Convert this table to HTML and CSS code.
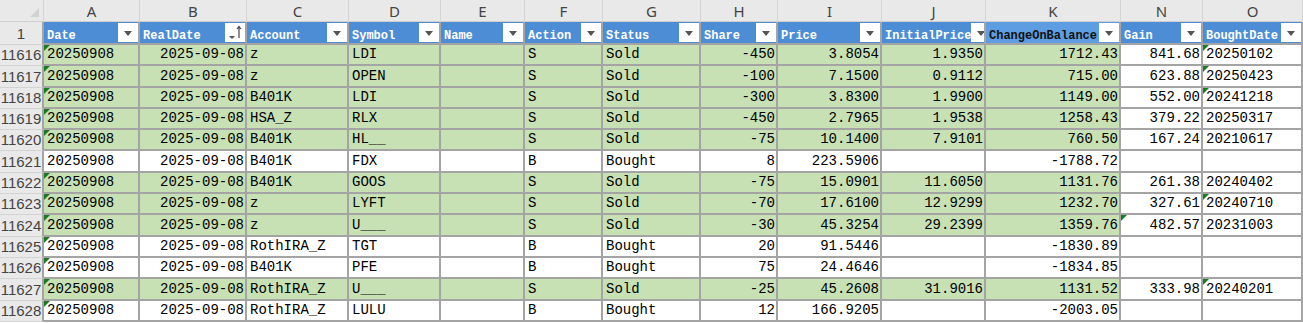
FILE: index.html
```html
<!DOCTYPE html>
<html lang="en">
<head>
    <meta charset="UTF-8">
    <title>Trades</title>
    <link rel="stylesheet" href="styles.css">
</head>
<body>

<div class="sheet">
    <div class="row letters">
        <div class="corner"><span class="corner-mark"></span></div>
        <div>A</div><div>B</div><div>C</div><div>D</div><div>E</div><div>F</div><div>G</div>
        <div>H</div><div>I</div><div>J</div><div>K</div><div>N</div><div>O</div>
    </div>

    <div class="row heads">
        <div class="rn">1</div>
        <div class="th"><span>Date</span><i class="dd"></i></div>
        <div class="th"><span>RealDate</span><i class="dd sorted"><svg width="18" height="19" viewBox="0 0 18 19"><path d="M3 13h6l-3 3z" fill="#555"/><path d="M13 4v11M11 6l2-2.5 2 2.5" stroke="#444" stroke-width="1.2" fill="none"/></svg></i></div>
        <div class="th"><span>Account</span><i class="dd"></i></div>
        <div class="th"><span>Symbol</span><i class="dd"></i></div>
        <div class="th"><span>Name</span><i class="dd"></i></div>
        <div class="th"><span>Action</span><i class="dd"></i></div>
        <div class="th"><span>Status</span><i class="dd"></i></div>
        <div class="th"><span>Share</span><i class="dd"></i></div>
        <div class="th"><span>Price</span><i class="dd"></i></div>
        <div class="th"><span>InitialPrice</span><i class="dd"></i></div>
        <div class="th active"><span>ChangeOnBalance</span><i class="dd"></i></div>
        <div class="th"><span>Gain</span><i class="dd"></i></div>
        <div class="th"><span>BoughtDate</span><i class="dd"></i></div>
    </div>

    <div class="row sold">
        <div class="rn">11616</div>
        <div class="c tag">20250908</div><div class="c r">2025-09-08</div><div class="c">z</div><div class="c">LDI</div><div class="c"></div><div class="c">S</div><div class="c">Sold</div>
        <div class="c r">-450</div><div class="c r">3.8054</div><div class="c r">1.9350</div><div class="c r">1712.43</div><div class="c r">841.68</div><div class="c tag">20250102</div>
    </div>
    <div class="row sold">
        <div class="rn">11617</div>
        <div class="c tag">20250908</div><div class="c r">2025-09-08</div><div class="c">z</div><div class="c">OPEN</div><div class="c"></div><div class="c">S</div><div class="c">Sold</div>
        <div class="c r">-100</div><div class="c r">7.1500</div><div class="c r">0.9112</div><div class="c r">715.00</div><div class="c r">623.88</div><div class="c tag">20250423</div>
    </div>
    <div class="row sold">
        <div class="rn">11618</div>
        <div class="c tag">20250908</div><div class="c r">2025-09-08</div><div class="c">B401K</div><div class="c">LDI</div><div class="c"></div><div class="c">S</div><div class="c">Sold</div>
        <div class="c r">-300</div><div class="c r">3.8300</div><div class="c r">1.9900</div><div class="c r">1149.00</div><div class="c r">552.00</div><div class="c tag">20241218</div>
    </div>
    <div class="row sold">
        <div class="rn">11619</div>
        <div class="c tag">20250908</div><div class="c r">2025-09-08</div><div class="c">HSA_Z</div><div class="c">RLX</div><div class="c"></div><div class="c">S</div><div class="c">Sold</div>
        <div class="c r">-450</div><div class="c r">2.7965</div><div class="c r">1.9538</div><div class="c r">1258.43</div><div class="c r">379.22</div><div class="c">20250317</div>
    </div>
    <div class="row sold">
        <div class="rn">11620</div>
        <div class="c tag">20250908</div><div class="c r">2025-09-08</div><div class="c">B401K</div><div class="c">HL__</div><div class="c"></div><div class="c">S</div><div class="c">Sold</div>
        <div class="c r">-75</div><div class="c r">10.1400</div><div class="c r">7.9101</div><div class="c r">760.50</div><div class="c r">167.24</div><div class="c">20210617</div>
    </div>
    <div class="row">
        <div class="rn">11621</div>
        <div class="c">20250908</div><div class="c r">2025-09-08</div><div class="c">B401K</div><div class="c">FDX</div><div class="c"></div><div class="c">B</div><div class="c">Bought</div>
        <div class="c r">8</div><div class="c r">223.5906</div><div class="c r"></div><div class="c r">-1788.72</div><div class="c r"></div><div class="c"></div>
    </div>
    <div class="row sold">
        <div class="rn">11622</div>
        <div class="c tag">20250908</div><div class="c r">2025-09-08</div><div class="c">B401K</div><div class="c">GOOS</div><div class="c"></div><div class="c">S</div><div class="c">Sold</div>
        <div class="c r">-75</div><div class="c r">15.0901</div><div class="c r">11.6050</div><div class="c r">1131.76</div><div class="c r">261.38</div><div class="c">20240402</div>
    </div>
    <div class="row sold">
        <div class="rn">11623</div>
        <div class="c tag">20250908</div><div class="c r">2025-09-08</div><div class="c">z</div><div class="c">LYFT</div><div class="c"></div><div class="c">S</div><div class="c">Sold</div>
        <div class="c r">-70</div><div class="c r">17.6100</div><div class="c r">12.9299</div><div class="c r">1232.70</div><div class="c r">327.61</div><div class="c tag">20240710</div>
    </div>
    <div class="row sold">
        <div class="rn">11624</div>
        <div class="c tag">20250908</div><div class="c r">2025-09-08</div><div class="c">z</div><div class="c">U___</div><div class="c"></div><div class="c">S</div><div class="c">Sold</div>
        <div class="c r">-30</div><div class="c r">45.3254</div><div class="c r">29.2399</div><div class="c r">1359.76</div><div class="c r tag">482.57</div><div class="c">20231003</div>
    </div>
    <div class="row">
        <div class="rn">11625</div>
        <div class="c tag">20250908</div><div class="c r">2025-09-08</div><div class="c">RothIRA_Z</div><div class="c">TGT</div><div class="c"></div><div class="c">B</div><div class="c">Bought</div>
        <div class="c r">20</div><div class="c r">91.5446</div><div class="c r"></div><div class="c r">-1830.89</div><div class="c r"></div><div class="c"></div>
    </div>
    <div class="row">
        <div class="rn">11626</div>
        <div class="c tag">20250908</div><div class="c r">2025-09-08</div><div class="c">B401K</div><div class="c">PFE</div><div class="c"></div><div class="c">B</div><div class="c">Bought</div>
        <div class="c r">75</div><div class="c r">24.4646</div><div class="c r"></div><div class="c r">-1834.85</div><div class="c r"></div><div class="c"></div>
    </div>
    <div class="row sold">
        <div class="rn">11627</div>
        <div class="c tag">20250908</div><div class="c r">2025-09-08</div><div class="c">RothIRA_Z</div><div class="c">U___</div><div class="c"></div><div class="c">S</div><div class="c">Sold</div>
        <div class="c r">-25</div><div class="c r">45.2608</div><div class="c r">31.9016</div><div class="c r">1131.52</div><div class="c r">333.98</div><div class="c tag">20240201</div>
    </div>
    <div class="row">
        <div class="rn">11628</div>
        <div class="c tag">20250908</div><div class="c r">2025-09-08</div><div class="c">RothIRA_Z</div><div class="c">LULU</div><div class="c"></div><div class="c">B</div><div class="c">Bought</div>
        <div class="c r">12</div><div class="c r">166.9205</div><div class="c r"></div><div class="c r">-2003.05</div><div class="c r"></div><div class="c"></div>
    </div>
</div>

</body>
</html>
```

FILE: styles.css
```css
body {
    margin: 0;
    background: #fff;
    overflow: hidden;
}

.sheet {
    width: 1303px;
    font-family: "Liberation Mono", "DejaVu Sans Mono", monospace;
    font-size: 14px;
    color: #000;
}

.row {
    display: grid;
    grid-template-columns: 44px 96px 107px 102px 92px 84px 78px 98px 77px 104px 104px 135px 82px 100px;
    height: 21.3px;
}

.row > div {
    box-sizing: border-box;
    overflow: hidden;
    white-space: nowrap;
}

/* column letters */
.letters {
    height: 22px;
    background: #e9e9e9;
    font-family: "Noto Sans", "Liberation Sans", sans-serif;
    font-size: 15px;
    color: #444;
}

.letters > div {
    display: flex;
    align-items: center;
    justify-content: center;
    border-right: 1px solid #d5d5d5;
    border-bottom: 1px solid #cfcfcf;
    line-height: 20px;
}

.corner {
    position: relative;
}

.corner-mark {
    position: absolute;
    right: 4px;
    bottom: 4px;
    width: 0;
    height: 0;
    border-left: 9px solid transparent;
    border-bottom: 9px solid #d2d2d2;
}

/* row numbers */
.rn {
    display: flex;
    align-items: flex-end;
    justify-content: center;
    background: #e9e9e9;
    border-bottom: 1px solid #d3d3d3;
    border-right: 2px solid #a4a4a4;
    font-family: "Liberation Sans", sans-serif;
    font-size: 15px;
    color: #444;
    line-height: 18px;
    padding-bottom: 1px;
}

/* table header */
.heads {
    height: 23px;
}

.th {
    display: flex;
    align-items: stretch;
    justify-content: space-between;
    background: #4c8dd5;
    color: #fff;
    font-weight: bold;
    font-size: 12px;
    border-right: 2px solid #a4a4a4;
    border-bottom: 2px solid #a4a4a4;
    padding-top: 1px;
}

.th span {
    padding: 7px 0 0 3px;
    line-height: 13px;
}

.th.active {
    background: #5f9de2;
    color: #111;
}

.dd {
    flex: none;
    width: 20px;
    margin-bottom: 1px;
    background: #fff;
    position: relative;
}

.dd::after {
    content: "";
    position: absolute;
    left: 6px;
    top: 8px;
    border-left: 4px solid transparent;
    border-right: 4px solid transparent;
    border-top: 5px solid #555;
}

.dd.sorted::after {
    display: none;
}

.dd svg {
    display: block;
    margin-left: 1px;
}

/* data cells */
.c {
    display: flex;
    align-items: flex-end;
    padding: 0 1px 1px 3px;
    line-height: 17px;
    border-right: 2px solid #a4a4a4;
    border-bottom: 2px solid #a4a4a4;
    position: relative;
}

.c.r {
    justify-content: flex-end;
}

.sold .c:nth-child(-n+12) {
    background: #c7e1b5;
}

.tag::before {
    content: "";
    position: absolute;
    left: 0;
    top: 0;
    border-top: 6px solid #1c7a25;
    border-right: 6px solid transparent;
}
```
